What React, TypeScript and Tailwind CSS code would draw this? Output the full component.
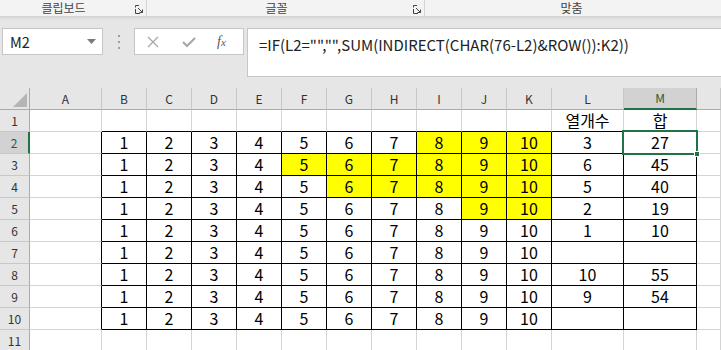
import React from "react";

const COLS = ["A", "B", "C", "D", "E", "F", "G", "H", "I", "J", "K", "L", "M", "N"];

// yellow start value per row (B..K cells with value >= start are filled)
const ROWS: { r: number; hi?: number; l?: string; m?: string }[] = [
  { r: 1, l: "열개수", m: "합" },
  { r: 2, hi: 8, l: "3", m: "27" },
  { r: 3, hi: 5, l: "6", m: "45" },
  { r: 4, hi: 6, l: "5", m: "40" },
  { r: 5, hi: 9, l: "2", m: "19" },
  { r: 6, l: "1", m: "10" },
  { r: 7 },
  { r: 8, l: "10", m: "55" },
  { r: 9, l: "9", m: "54" },
  { r: 10 },
  { r: 11 },
];

const inBox = (r: number, c: number) => r >= 2 && r <= 10 && c >= 1 && c <= 12;

const Launcher = () => (
  <svg width="9" height="9" viewBox="0 0 9 9" className="text-[#444]">
    <path d="M0.5 4 V8.5 H5" fill="none" stroke="currentColor" />
    <path d="M0.5 0.5 H4" fill="none" stroke="currentColor" />
    <path d="M0.5 0.5 V2.5" fill="none" stroke="currentColor" />
    <path d="M3 3 L7.5 7.5 M4.5 7.5 H7.5 V4.5" fill="none" stroke="currentColor" />
  </svg>
);

function Cell({ r, c, text, yellow }: { r: number; c: number; text?: string; yellow?: boolean }) {
  const rightBlack = inBox(r, c) || inBox(r, c + 1);
  const bottomBlack = inBox(r, c) || inBox(r + 1, c);
  const selected = r === 2 && c === 12;
  return (
    <div
      className={`relative h-[22px] flex items-end justify-center pb-[1px] border-r border-b ${
        rightBlack ? "border-r-black" : "border-r-[#d4d4d4]"
      } ${bottomBlack ? "border-b-black" : "border-b-[#d4d4d4]"} ${yellow ? "bg-[#ffff00]" : "bg-white"}`}
    >
      <span className="leading-[20px]">{text}</span>
      {selected && (
        <div className="absolute left-[-2px] top-[-2px] right-[-2px] bottom-[-2px] border-2 border-[#217346] z-10">
          <div className="absolute right-[-4px] bottom-[-4px] w-[6px] h-[6px] bg-[#217346] border border-white" />
        </div>
      )}
    </div>
  );
}

export default function App() {
  return (
    <div
      className="w-[721px] h-[350px] overflow-hidden bg-[#e6e6e6] text-black"
      style={{ fontFamily: '"Noto Sans CJK KR", "Noto Sans", sans-serif' }}
    >
      {/* Ribbon group labels */}
      <div className="h-[16px] bg-[#f3f3f3] flex text-[12px] leading-[16px] text-[#444]">
        <div className="w-[147px] flex border-r border-[#d5d5d5]">
          <div className="w-[127px] text-center">클립보드</div>
          <div className="flex items-center pt-[2px] pl-[8px]"><Launcher /></div>
        </div>
        <div className="w-[278px] flex border-r border-[#d5d5d5]">
          <div className="w-[259px] text-center">글꼴</div>
          <div className="flex items-center pt-[2px] pl-[7px]"><Launcher /></div>
        </div>
        <div className="flex-1 text-center pr-[3px]">맞춤</div>
      </div>
      <div className="h-[4px] bg-gradient-to-b from-[#d2d2d2] to-[#e6e6e6]" />

      {/* Formula bar */}
      <div className="flex items-start pt-[8px] h-[68px]">
        <div className="ml-[2px] w-[101px] h-[27px] bg-white border border-[#c6c6c6] flex items-center justify-between pl-[7px] pr-[6px]">
          <span className="text-[14.5px] text-[#222]">M2</span>
          <svg width="9" height="5" viewBox="0 0 9 5"><path d="M0 0 H9 L4.5 5 Z" fill="#7a7a7a" /></svg>
        </div>
        <div className="w-[31px] h-[27px] flex flex-col items-center justify-center gap-[4px]">
          <div className="w-[2px] h-[2px] bg-[#9e9e9e]" />
          <div className="w-[2px] h-[2px] bg-[#9e9e9e]" />
          <div className="w-[2px] h-[2px] bg-[#9e9e9e]" />
        </div>
        <div className="w-[110px] h-[27px] bg-white border border-[#c6c6c6] flex items-center">
          <svg width="12" height="12" viewBox="0 0 12 12" className="ml-[12px]">
            <path d="M1 1 L11 11 M11 1 L1 11" stroke="#a8a8a8" strokeWidth="1.3" />
          </svg>
          <svg width="14" height="12" viewBox="0 0 14 12" className="ml-[23px]">
            <path d="M1 6 L5 10 L13 2" stroke="#a8a8a8" strokeWidth="2.2" fill="none" />
          </svg>
          <span
            className="ml-[21px] text-[14px] italic text-[#5a5a5a]"
            style={{ fontFamily: '"Liberation Serif", serif' }}
          >
            f<span className="text-[11px]">x</span>
          </span>
        </div>
        <div className="ml-[3px] flex-1 h-[49px] bg-white border border-[#c6c6c6] border-r-0 pl-[11px] pt-[3px]">
          <span className="text-[15px] leading-[20px] text-[#222]">
            =IF(L2="","",SUM(INDIRECT(CHAR(76-L2)&ROW()):K2))
          </span>
        </div>
      </div>

      {/* Sheet grid */}
      <div className="grid grid-cols-[30px_72px_repeat(10,45px)_72px_73px_1fr] text-[16px]">
        {/* Column headers */}
        <div className="h-[22px] bg-[#e6e6e6] border-r border-b border-r-[#ababab] border-b-[#ababab] flex items-end justify-end pr-[2px] pb-[2px]">
          <svg width="14" height="14" viewBox="0 0 14 14"><path d="M14 0 L14 14 L0 14 Z" fill="#b5b5b5" /></svg>
        </div>
        {COLS.map((c) =>
          c === "M" ? (
            <div key={c} className="h-[22px] bg-[#d2d2d2] border-r border-r-[#ababab] border-b-2 border-b-[#217346] flex items-center justify-center text-[12px] text-[#1e5e3a]">
              {c}
            </div>
          ) : (
            <div key={c} className="h-[22px] bg-[#e6e6e6] border-r border-b border-r-[#c8c8c8] border-b-[#ababab] flex items-center justify-center text-[12px] text-[#333]">
              {c === "N" ? "" : c}
            </div>
          )
        )}

        {ROWS.map((row) => (
          <React.Fragment key={row.r}>
            {row.r === 2 ? (
              <div className="h-[22px] bg-[#d2d2d2] border-r-2 border-b border-r-[#217346] border-b-[#c8c8c8] flex items-center justify-center text-[12px] text-[#1e5e3a]">
                {row.r}
              </div>
            ) : (
              <div className="h-[22px] bg-[#e6e6e6] border-r border-b border-r-[#ababab] border-b-[#c8c8c8] flex items-center justify-center text-[12px] text-[#333]">
                {row.r}
              </div>
            )}
            {COLS.map((c, ci) => {
              let text: string | undefined;
              let yellow = false;
              if (row.r >= 2 && row.r <= 10 && ci >= 1 && ci <= 10) {
                text = String(ci);
                yellow = row.hi !== undefined && ci >= row.hi;
              } else if (ci === 11) text = row.l;
              else if (ci === 12) text = row.m;
              return <Cell key={c} r={row.r} c={ci} text={text} yellow={yellow} />;
            })}
          </React.Fragment>
        ))}
      </div>
    </div>
  );
}
